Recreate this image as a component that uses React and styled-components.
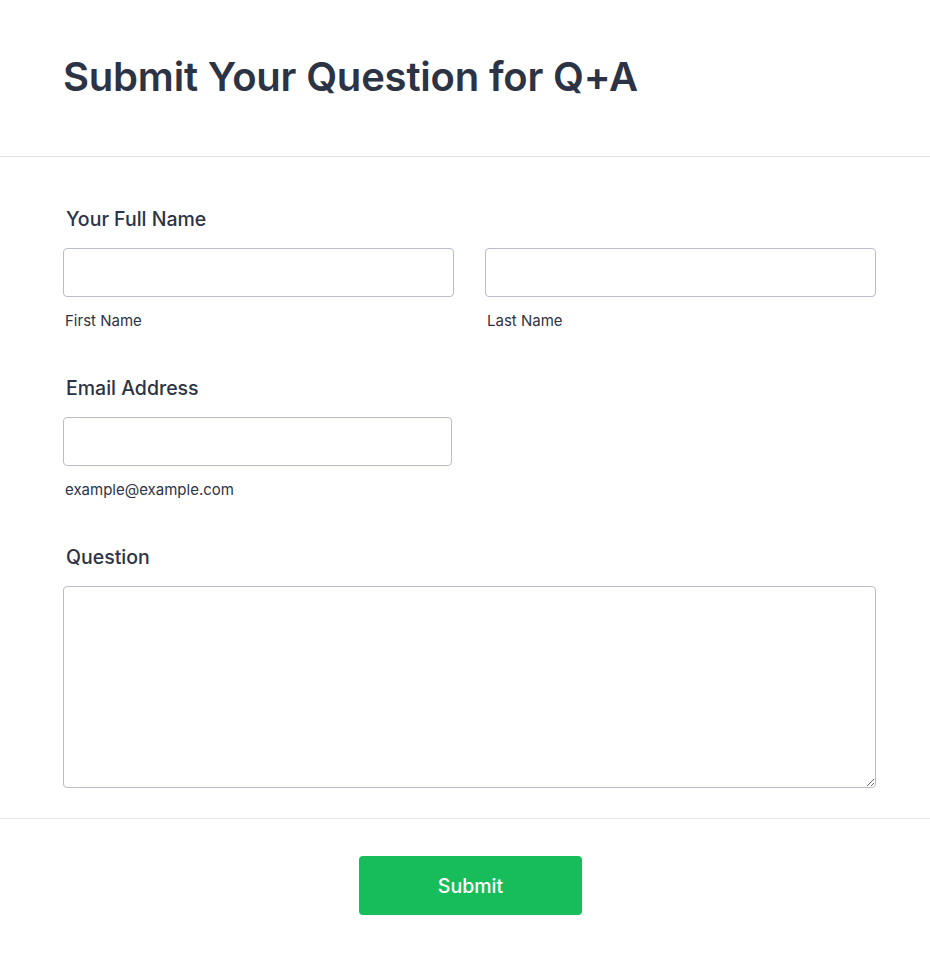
import React from "react";
import styled, { createGlobalStyle } from "styled-components";

const Global = createGlobalStyle`
  html, body { margin: 0; padding: 0; background: #fff; }
  body { font-family: Inter, "Noto Sans", sans-serif; color: #2c3345; }
  * { box-sizing: border-box; }
`;

const Page = styled.div`
  width: 930px;
  background: #fff;
`;

const Header = styled.header`
  padding: 52px 63px 54px;
  border-bottom: 1px solid #e1e3ea;
`;

const Title = styled.h1`
  margin: 0;
  font-size: 40px;
  line-height: 50px;
  font-weight: 600;
  color: #2c3345;
  letter-spacing: -0.2px;
`;

const Body = styled.div`
  padding: 49px 54px 30px 63px;
  display: flex;
  flex-direction: column;
  gap: 45px;
  border-bottom: 1px solid #e8e9ee;
`;

const Field = styled.div`
  display: flex;
  flex-direction: column;
`;

const Label = styled.label`
  font-size: 19.5px;
  font-weight: 500;
  line-height: 26px;
  margin: 0 0 16px 3px;
  color: #2c3345;
`;

const Row = styled.div`
  display: grid;
  grid-template-columns: ${(p) => p.$cols || "1fr"};
  column-gap: ${(p) => p.$gap || "0px"};
`;

const Col = styled.div`
  display: flex;
  flex-direction: column;
`;

const Input = styled.input`
  width: ${(p) => p.$width || "100%"};
  height: 49px;
  border: 1px solid #b8bdc9;
  border-radius: 4px;
  padding: 0 12px;
  font: inherit;
  background: #fff;
  outline: none;
`;

const TextArea = styled.textarea`
  width: 100%;
  height: 202px;
  border: 1px solid #b8bdc9;
  border-radius: 4px;
  padding: 10px 12px;
  font: inherit;
  background: #fff;
  outline: none;
  resize: vertical;
  display: block;
`;

const SubLabel = styled.span`
  font-size: 15px;
  line-height: 18px;
  color: #2c3345;
  margin: 15px 0 0 2px;
`;

const Footer = styled.div`
  display: flex;
  justify-content: center;
  padding: 37px 0 50px 11px;
`;

const Button = styled.button`
  width: 223px;
  height: 59px;
  border: none;
  border-radius: 4px;
  background: #18bd5b;
  color: #fff;
  font-family: Inter, "Noto Sans", sans-serif;
  font-size: 19.5px;
  font-weight: 500;
  cursor: pointer;
`;

export default function App() {
  return (
    <Page>
      <Global />
      <Header>
        <Title>Submit Your Question for Q+A</Title>
      </Header>
      <Body>
        <Field>
          <Label>Your Full Name</Label>
          <Row $cols="1fr 1fr" $gap="31px">
            <Col>
              <Input />
              <SubLabel>First Name</SubLabel>
            </Col>
            <Col>
              <Input />
              <SubLabel>Last Name</SubLabel>
            </Col>
          </Row>
        </Field>
        <Field>
          <Label>Email Address</Label>
          <Col>
            <Input $width="389px" />
            <SubLabel>example@example.com</SubLabel>
          </Col>
        </Field>
        <Field>
          <Label>Question</Label>
          <TextArea />
        </Field>
      </Body>
      <Footer>
        <Button>Submit</Button>
      </Footer>
    </Page>
  );
}
